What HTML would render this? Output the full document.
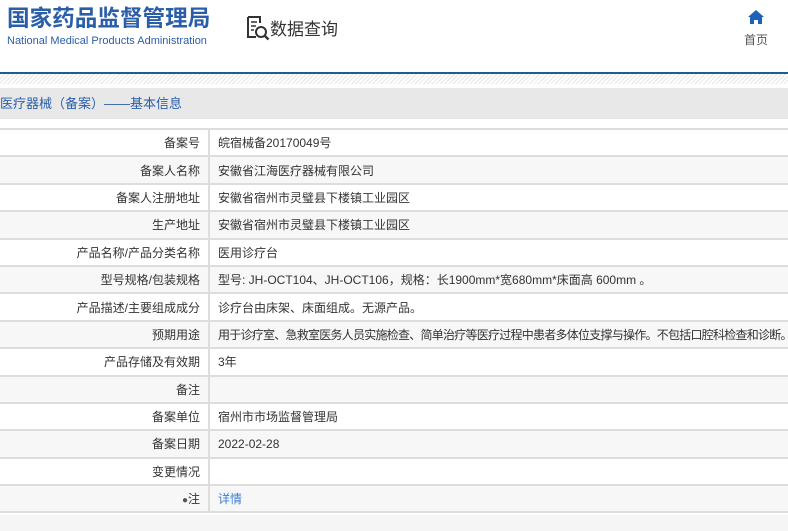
<!DOCTYPE html>
<html><head><meta charset="utf-8"><style>
*{margin:0;padding:0;box-sizing:border-box}
body{width:788px;height:531px;overflow:hidden;background:#fff;font-family:"Liberation Sans","Noto Sans CJK SC",sans-serif;color:#333;position:relative}
.t1{position:absolute;left:7px;top:5px;font-size:22.6px;font-weight:bold;color:#2a5ea8;white-space:nowrap;line-height:28px}
.t2{position:absolute;left:7px;top:35px;font-size:11px;color:#2a5ea8;white-space:nowrap}
.sq{position:absolute;left:246px;top:15px;font-size:17px;color:#333;white-space:nowrap}
.home{position:absolute;left:742px;top:10px;font-size:12px;color:#555;text-align:center;width:28px}
.line{position:absolute;left:0;top:72px;width:788px;height:2px;background:#1f5c94}
.hatch{position:absolute;left:0;top:74px;width:788px;height:10px;background:repeating-linear-gradient(135deg,#e6e6e6 0 1px,#fff 1px 3px)}
.bar{position:absolute;left:0;top:88px;width:788px;height:31px;background:#e8e8e8;font-size:13px;color:#2a5ea8;line-height:31px}
table{position:absolute;left:-4px;top:128px;width:800px;border-collapse:collapse;font-size:12px;table-layout:fixed}
td{border:2px solid #ddd;height:27.4px;padding:0 8px;white-space:nowrap;overflow:hidden}
td.l{text-align:right}
tr:nth-child(even) td{background:#f7f7f7}
.bot{position:absolute;left:0;top:515px;width:788px;height:16px;background:#f5f5f5}
</style></head><body>
<div class="t1">国家药品监督管理局</div>
<div class="t2">National Medical Products Administration</div>
<div class="sq"><svg width="24" height="26" viewBox="0 0 24 26" style="vertical-align:-6px"><path d="M2 2h12v6M2 2v20h8" fill="none" stroke="#333" stroke-width="2"/><path d="M5 7h6M5 11h5M5 15h3" stroke="#333" stroke-width="1.6"/><circle cx="15" cy="17" r="5" fill="none" stroke="#333" stroke-width="2"/><path d="M18.5 20.5l4 4" stroke="#333" stroke-width="2.4"/></svg>数据查询</div>
<div class="home"><svg width="16" height="14" viewBox="0 0 16 14"><path d="M8 0L0 7h2v7h4v-4h4v4h4V7h2z" fill="#1e62b8"/></svg><div style="margin-top:4px">首页</div></div>
<div class="line"></div><div class="hatch"></div>
<div class="bar">医疗器械（备案）——基本信息</div>
<table>
<colgroup><col style="width:212px"><col></colgroup>
<tr><td class="l">备案号</td><td>皖宿械备20170049号</td></tr>
<tr><td class="l">备案人名称</td><td>安徽省江海医疗器械有限公司</td></tr>
<tr><td class="l">备案人注册地址</td><td>安徽省宿州市灵璧县下楼镇工业园区</td></tr>
<tr><td class="l">生产地址</td><td>安徽省宿州市灵璧县下楼镇工业园区</td></tr>
<tr><td class="l">产品名称/产品分类名称</td><td>医用诊疗台</td></tr>
<tr><td class="l">型号规格/包装规格</td><td>型号: JH-OCT104、JH-OCT106，规格：长1900mm*宽680mm*床面高 600mm 。</td></tr>
<tr><td class="l">产品描述/主要组成成分</td><td>诊疗台由床架、床面组成。无源产品。</td></tr>
<tr><td class="l">预期用途</td><td style="letter-spacing:-0.75px">用于诊疗室、急救室医务人员实施检查、简单治疗等医疗过程中患者多体位支撑与操作。不包括口腔科检查和诊断。</td></tr>
<tr><td class="l">产品存储及有效期</td><td>3年</td></tr>
<tr><td class="l">备注</td><td></td></tr>
<tr><td class="l">备案单位</td><td>宿州市市场监督管理局</td></tr>
<tr><td class="l">备案日期</td><td>2022-02-28</td></tr>
<tr><td class="l">变更情况</td><td></td></tr>
<tr><td class="l"><span style="font-size:10px;color:#555">●</span>注</td><td style="color:#3a7fd5">详情</td></tr>
</table>
<div class="bot"></div>
</body></html>
